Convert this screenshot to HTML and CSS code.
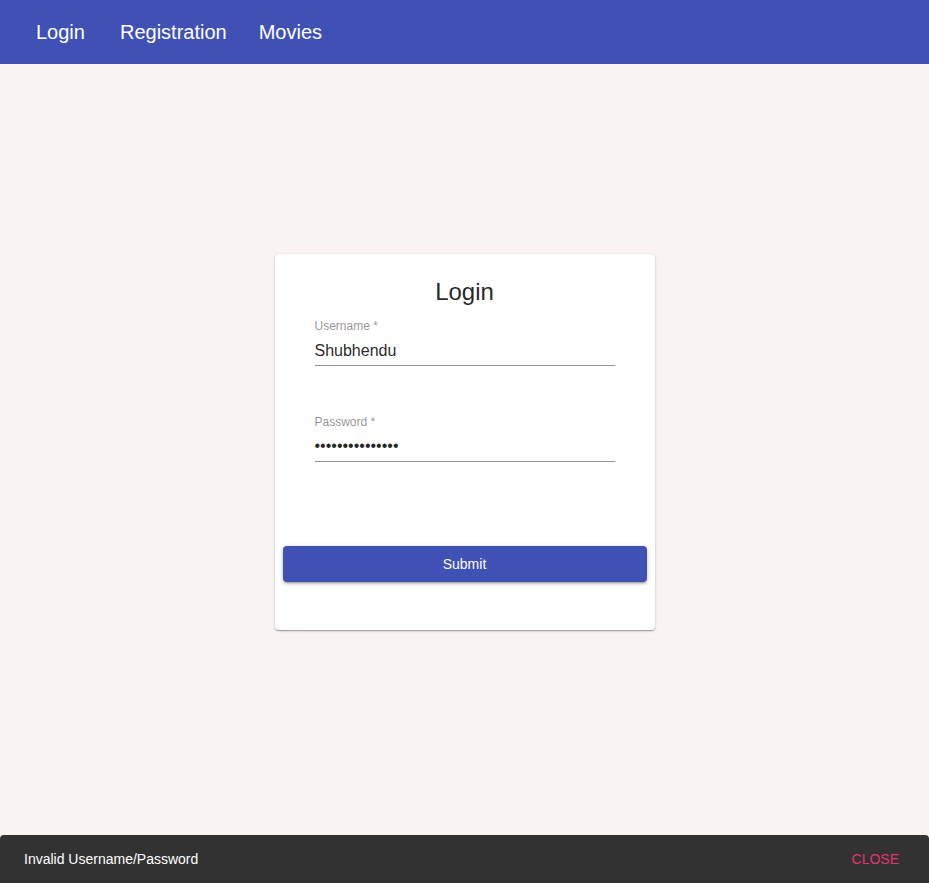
FILE: index.html
```html
<!DOCTYPE html>
<html>
<head>
<meta charset="utf-8">
<link rel="stylesheet" href="styles.css">
</head>
<body>
<header class="appbar">
  <nav class="nav">
    <a class="nav-item nav-login">Login</a>
    <a class="nav-item">Registration</a>
    <a class="nav-item">Movies</a>
  </nav>
</header>
<main class="main">
  <section class="card">
    <h2 class="title">Login</h2>
    <div class="field">
      <label class="label">Username *</label>
      <div class="input">Shubhendu</div>
    </div>
    <div class="field field-second">
      <label class="label">Password *</label>
      <div class="input input-pass">•••••••••••••••</div>
    </div>
    <button class="submit">Submit</button>
  </section>
</main>
<div class="snackbar">
  <span class="snack-msg">Invalid Username/Password</span>
  <span class="snack-action">CLOSE</span>
</div>
</body>
</html>
```
FILE: styles.css
```css
* { box-sizing: border-box; }
html, body { margin: 0; padding: 0; }
body {
  font-family: "Liberation Sans", Arial, sans-serif;
  background: #f9f3f2;
  width: 929px;
  height: 883px;
  overflow: hidden;
  position: relative;
}
.appbar {
  height: 64px;
  background: #3f51b5;
  display: flex;
  align-items: center;
  padding-left: 36px;
}
.nav { display: flex; gap: 32px; }
.nav-item {
  color: #fff;
  font-size: 20px;
  line-height: 23px;
}
.nav-login { margin-right: 3px; }
.main {
  display: flex;
  justify-content: center;
  padding-top: 190px;
}
.card {
  width: 380px;
  height: 376px;
  background: #fff;
  border-radius: 4px;
  box-shadow: 0 1px 3px rgba(0,0,0,0.2), 0 1px 1px rgba(0,0,0,0.14), 0 2px 1px -1px rgba(0,0,0,0.12);
  padding: 24px 8px 0;
  display: flex;
  flex-direction: column;
  align-items: center;
}
.title {
  margin: 0;
  font-weight: 400;
  font-size: 24px;
  line-height: 28px;
  color: rgba(0,0,0,0.87);
}
.field {
  width: 300px;
  margin-top: 14px;
  display: flex;
  flex-direction: column;
}
.field-second { margin-top: 50px; }
.label {
  font-size: 12px;
  line-height: 12px;
  color: rgba(0,0,0,0.45);
}
.input {
  margin-top: 4px;
  padding: 5px 0 5px;
  font-size: 16px;
  line-height: 19px;
  color: rgba(0,0,0,0.87);
  border-bottom: 1px solid rgba(0,0,0,0.42);
}
.input-pass {
  padding: 4px 0 6px;
}
.submit {
  margin-top: 84px;
  width: 364px;
  height: 36px;
  border: 0;
  border-radius: 4px;
  background: #3f51b5;
  color: #fff;
  font-family: "Liberation Sans", Arial, sans-serif;
  font-size: 14px;
  box-shadow: 0 1px 5px rgba(0,0,0,0.2), 0 2px 2px rgba(0,0,0,0.14), 0 3px 1px -2px rgba(0,0,0,0.12);
}
.snackbar {
  position: absolute;
  left: 0;
  right: 0;
  bottom: 0;
  height: 48px;
  background: #323232;
  border-radius: 4px 4px 0 0;
  display: flex;
  align-items: center;
  justify-content: space-between;
  padding: 0 30px 0 24px;
  font-size: 14px;
}
.snack-msg { color: #fff; }
.snack-action { color: #e8336e; }
```
